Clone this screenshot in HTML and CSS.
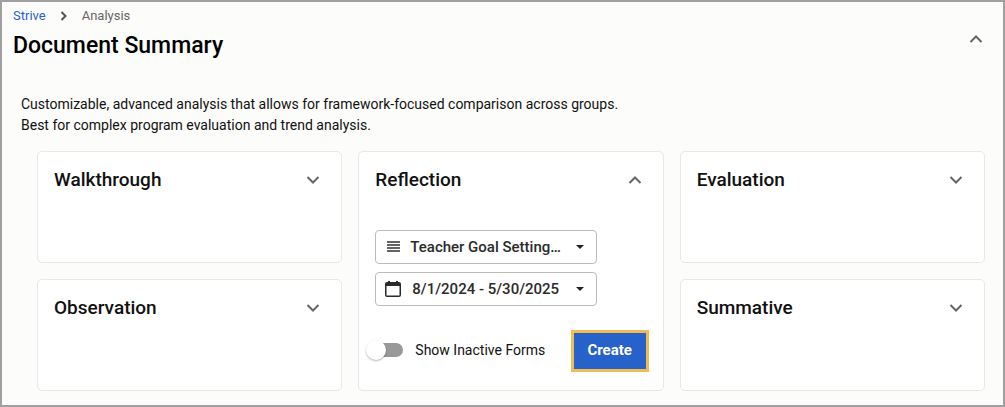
FILE: index.html
```html
<!DOCTYPE html>
<html lang="en">
<head>
	<meta charset="UTF-8">
	<title>Document Summary</title>
	<link rel="stylesheet" href="styles.css">
</head>
<body>
	<div class="page">
		<nav class="breadcrumb">
			<a href="#">Strive</a>
			<svg class="separator" viewBox="0 0 8 10"><path d="M1.5 1l4 4-4 4"/></svg>
			<span>Analysis</span>
		</nav>
		<header class="pageHead">
			<h1>Document Summary</h1>
			<button type="button" class="toggle" aria-label="Collapse Document Summary">
				<svg viewBox="0 0 14 8"><path d="M1.500 7L7 1.500 12.500 7"/></svg>
			</button>
		</header>
		<p class="intro">Customizable, advanced analysis that allows for framework-focused comparison across groups.<br>Best for complex program evaluation and trend analysis.</p>
		<main class="cards">
			<section class="card">
				<div class="cardHead">
					<h2>Walkthrough</h2>
					<button type="button" class="toggle" aria-label="Expand Walkthrough">
						<svg viewBox="0 0 14 8"><path d="M1.500 1L7 6.500 12.500 1"/></svg>
					</button>
				</div>
			</section>
			<section class="card open">
				<div class="cardHead">
					<h2>Reflection</h2>
					<button type="button" class="toggle" aria-label="Collapse Reflection">
						<svg viewBox="0 0 14 8"><path d="M1.500 7L7 1.500 12.500 7"/></svg>
					</button>
				</div>
				<div class="fields">
					<div class="field">
						<select class="forms" aria-label="Form">
							<option>Teacher Goal Setting…</option>
						</select>
						<svg class="fieldIcon" viewBox="0 0 18 18"><path d="M3 4h13M3 7h13M3 10h13M3 13h13" fill="none" stroke="#333" stroke-width="1.5"/></svg>
						<svg class="caret" viewBox="0 0 8 4"><path d="M0 0h8L4 4z"/></svg>
					</div>
					<div class="field">
						<select class="dates" aria-label="Date range">
							<option>8/1/2024 - 5/30/2025</option>
						</select>
						<svg class="fieldIcon" viewBox="0 0 18 18"><path fill-rule="evenodd" d="M4 1h2v1h6V1h2v1h1a2 2 0 0 1 2 2v11a2 2 0 0 1-2 2H3a2 2 0 0 1-2-2V4a2 2 0 0 1 2-2h1zM2.500 6v9.500h13V6z"/></svg>
						<svg class="caret" viewBox="0 0 8 4"><path d="M0 0h8L4 4z"/></svg>
					</div>
				</div>
				<div class="actions">
					<label class="inactive">
						<input type="checkbox" class="switch">
						Show Inactive Forms
					</label>
					<button type="button" class="create">Create</button>
				</div>
			</section>
			<section class="card">
				<div class="cardHead">
					<h2>Evaluation</h2>
					<button type="button" class="toggle" aria-label="Expand Evaluation">
						<svg viewBox="0 0 14 8"><path d="M1.500 1L7 6.500 12.500 1"/></svg>
					</button>
				</div>
			</section>
			<section class="card">
				<div class="cardHead">
					<h2>Observation</h2>
					<button type="button" class="toggle" aria-label="Expand Observation">
						<svg viewBox="0 0 14 8"><path d="M1.500 1L7 6.500 12.500 1"/></svg>
					</button>
				</div>
			</section>
			<section class="card">
				<div class="cardHead">
					<h2>Summative</h2>
					<button type="button" class="toggle" aria-label="Expand Summative">
						<svg viewBox="0 0 14 8"><path d="M1.500 1L7 6.500 12.500 1"/></svg>
					</button>
				</div>
			</section>
		</main>
	</div>
</body>
</html>
```
FILE: styles.css
```css
* {
	box-sizing: border-box;
	margin: 0;
	padding: 0;
}
body {
	font-family: Roboto, sans-serif;
	font-size: 14px;
	line-height: 20px;
	color: #111;
	background: #fcfcfa;
}
button, select {
	font: inherit;
	color: inherit;
	border: none;
	background: none;
	cursor: pointer;
}
svg {
	display: block;
}
.page {
	min-height: 100vh;
	padding: 4px 18px 13px 11px;
	border: 2px solid #a0a0a0;
}
.breadcrumb {
	display: flex;
	align-items: center;
	font-size: 13px;
	color: #666;
}
.breadcrumb a {
	color: #2962cc;
	text-decoration: none;
}
.separator {
	width: 8px;
	height: 10px;
	margin: 0 14px;
	fill: none;
	stroke: #555;
	stroke-width: 2;
}
.pageHead {
	display: flex;
	justify-content: space-between;
	height: 68px;
	padding: 4px 2px 0 0;
}
h1 {
	font-size: 23px;
	font-weight: 500;
	line-height: 32px;
	color: #000;
}
/* 展开 / 收起 按钮 */
.toggle {
	width: 14px;
	height: 18px;
}
.toggle svg {
	width: 14px;
	height: 8px;
	fill: none;
	stroke: #666;
	stroke-width: 2;
}
.intro {
	padding-left: 8px;
	line-height: 21px;
}
.cards {
	display: grid;
	grid-template-columns: repeat(3, 1fr);
	grid-auto-rows: minmax(112px, auto);
	gap: 16px;
	padding: 15px 0 0 24px;
}
.card {
	padding: 16px;
	border: 1px solid #e8e8e6;
	border-radius: 5px;
	background: #fff;
}
.card.open {
	grid-row: span 2;
}
.cardHead {
	display: flex;
	align-items: center;
	justify-content: space-between;
	padding-right: 5px;
}
h2 {
	font-size: 19px;
	font-weight: 500;
	line-height: 24px;
}
.fields {
	display: grid;
	gap: 8px;
	width: 222px;
	max-width: 100%;
	margin-top: 38px;
}
/* select 铺满整行 图标叠在同一行上 */
.field {
	display: grid;
	grid-template-columns: 34px 1fr 24px;
	align-items: center;
	height: 34px;
	border: 1px solid #bbb;
	border-radius: 4px;
}
.field select {
	grid-area: 1 / 1 / 2 / -1;
	width: 100%;
	height: 100%;
	appearance: none;
	padding: 0 24px 0 34px;
	font-size: 15px;
	font-weight: 500;
	color: #2b2b2b;
}
.field .dates {
	padding-left: 36px;
}
.fieldIcon {
	grid-area: 1 / 1;
	width: 18px;
	height: 18px;
	margin-left: 8px;
	fill: #2b2b2b;
	pointer-events: none;
}
.caret {
	grid-area: 1 / 3;
	width: 8px;
	height: 4px;
	margin-left: 4px;
	fill: #222;
	pointer-events: none;
}
.actions {
	display: flex;
	align-items: center;
	justify-content: space-between;
	margin: 24px -2px 0 -8px;
}
.inactive {
	display: flex;
	align-items: center;
	gap: 12px;
	padding-bottom: 3px;
}
/* 开关 */
.switch {
	position: relative;
	appearance: none;
	width: 30px;
	height: 14px;
	margin-left: 6px;
	border-radius: 7px;
	background: #999;
	cursor: pointer;
}
.switch:before {
	content: '';
	position: absolute;
	top: -3px;
	left: -7px;
	width: 20px;
	height: 20px;
	border-radius: 50%;
	background: #fff;
	box-shadow: 0 1px 2px rgba(0, 0, 0, 0.3);
}
.switch:checked:before {
	left: 16px;
}
.create {
	width: 78px;
	height: 42px;
	padding-bottom: 3px;
	border: 3px solid #f2bc52;
	background: #2662c9;
	color: #fff;
	font-size: 15px;
	font-weight: 700;
}
```
